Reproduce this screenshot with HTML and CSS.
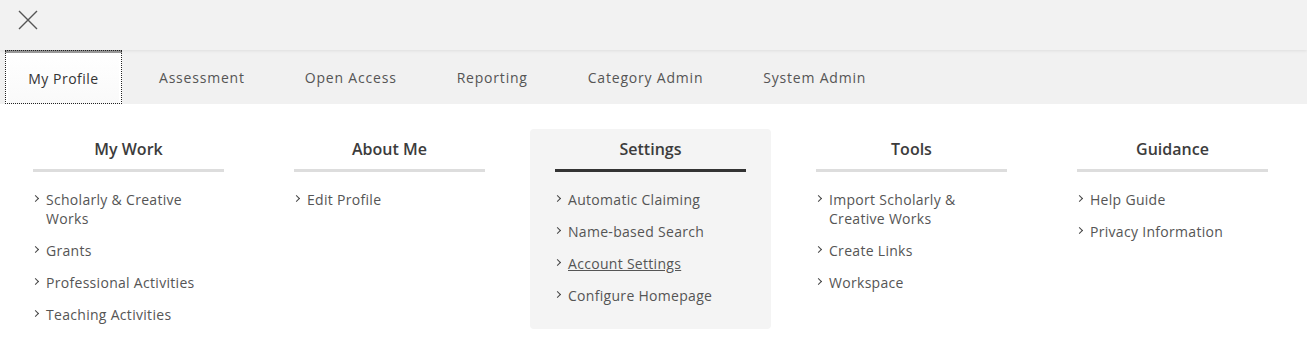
FILE: index.html
```html
<!DOCTYPE html>
<html lang="en">

<head>
  <meta charset="UTF-8">
  <meta name="viewport" content="width=device-width, initial-scale=1.0">
  <title>My Profile Menu</title>
  <link rel="stylesheet" href="styles.css">
</head>

<body>
  <header class="topbar">
    <button class="close-btn" aria-label="Close menu">
      <svg width="20" height="20" viewBox="0 0 20 20">
        <path d="M1 1 L19 19 M19 1 L1 19" stroke="#555" stroke-width="1.4" fill="none" />
      </svg>
    </button>
  </header>

  <nav class="tabs">
    <a class="tab active" href="#">My Profile</a>
    <a class="tab" href="#">Assessment</a>
    <a class="tab" href="#">Open Access</a>
    <a class="tab" href="#">Reporting</a>
    <a class="tab" href="#">Category Admin</a>
    <a class="tab" href="#">System Admin</a>
  </nav>

  <div class="menu">
    <section class="col">
      <h2>My Work</h2>
      <ul>
        <li><span class="chev"></span><a href="#">Scholarly &amp; Creative Works</a></li>
        <li><span class="chev"></span><a href="#">Grants</a></li>
        <li><span class="chev"></span><a href="#">Professional Activities</a></li>
        <li><span class="chev"></span><a href="#">Teaching Activities</a></li>
      </ul>
    </section>
    <section class="col">
      <h2>About Me</h2>
      <ul>
        <li><span class="chev"></span><a href="#">Edit Profile</a></li>
      </ul>
    </section>
    <section class="col current">
      <h2>Settings</h2>
      <ul>
        <li><span class="chev"></span><a href="#">Automatic Claiming</a></li>
        <li><span class="chev"></span><a href="#">Name-based Search</a></li>
        <li><span class="chev"></span><a class="hover" href="#">Account Settings</a></li>
        <li><span class="chev"></span><a href="#">Configure Homepage</a></li>
      </ul>
    </section>
    <section class="col">
      <h2>Tools</h2>
      <ul>
        <li><span class="chev"></span><a href="#">Import Scholarly &amp; Creative Works</a></li>
        <li><span class="chev"></span><a href="#">Create Links</a></li>
        <li><span class="chev"></span><a href="#">Workspace</a></li>
      </ul>
    </section>
    <section class="col">
      <h2>Guidance</h2>
      <ul>
        <li><span class="chev"></span><a href="#">Help Guide</a></li>
        <li><span class="chev"></span><a href="#">Privacy Information</a></li>
      </ul>
    </section>
  </div>
</body>

</html>
```

FILE: styles.css
```css
*,
*::before,
*::after {
  box-sizing: border-box;
}

:root {
  --bar: #f2f2f2;
  --tabbar: #f1f1f1;
  --text: #555;
  --heading: #3c3c3c;
  --rule: #dddddd;
  --panel: #f4f4f4;
}

html,
body {
  margin: 0;
  padding: 0;
  background: #fff;
  font-family: 'Open Sans', sans-serif;
  color: var(--text);
}

.topbar {
  height: 50px;
  background: var(--bar);
  display: flex;
  align-items: flex-start;
  padding: 10px 0 0 18px;
  position: relative;
  z-index: 1;
  box-shadow: 0 1px 3px rgba(0, 0, 0, 0.08);
}

.close-btn {
  background: none;
  border: 0;
  padding: 0;
  width: 20px;
  height: 20px;
  cursor: pointer;
}

.close-btn svg {
  display: block;
}

.tabs {
  display: flex;
  height: 54px;
  background: var(--tabbar);
  padding-left: 5px;
}

.tab {
  display: flex;
  align-items: center;
  padding: 0 30px;
  font-size: 14px;
  letter-spacing: 0.8px;
  color: var(--text);
  text-decoration: none;
}

.tab.active {
  width: 117px;
  justify-content: center;
  padding: 3px 0 0;
  margin-right: 7px;
  letter-spacing: 0.5px;
  color: #333;
  background: linear-gradient(#fff, #f9f9f9);
  outline: 1px dotted #222;
  outline-offset: -1px;
  box-shadow: inset 0 3px 0 #999, inset 3px 0 0 #fff, inset -3px 0 0 #fff;
}

.menu {
  display: flex;
  align-items: flex-start;
  gap: 20px;
  padding: 25px 0 0 8px;
}

.col {
  width: 241px;
  padding: 9px 25px 24px;
  border-radius: 4px;
}

.col.current {
  background: var(--panel);
}

.col h2 {
  margin: 0;
  font-size: 16px;
  font-weight: 600;
  line-height: 22px;
  text-align: center;
  color: var(--heading);
  padding-bottom: 9px;
  border-bottom: 3px solid var(--rule);
}

.col.current h2 {
  border-bottom-color: #333;
}

.col ul {
  list-style: none;
  margin: 18px 0 0;
  padding: 0;
}

.col li {
  display: flex;
  gap: 7px;
  font-size: 14px;
  line-height: 19px;
  letter-spacing: 0.3px;
  margin-bottom: 13px;
}

.col li:last-child {
  margin-bottom: 0;
}

.col li a {
  color: var(--text);
  text-decoration: none;
  max-width: 150px;
}

.col li a.hover {
  text-decoration: underline;
}

.chev {
  flex: none;
  width: 5px;
  height: 5px;
  margin: 6px 1px 0 0;
  border-top: 1px solid #444;
  border-right: 1px solid #444;
  transform: rotate(45deg);
}
```
